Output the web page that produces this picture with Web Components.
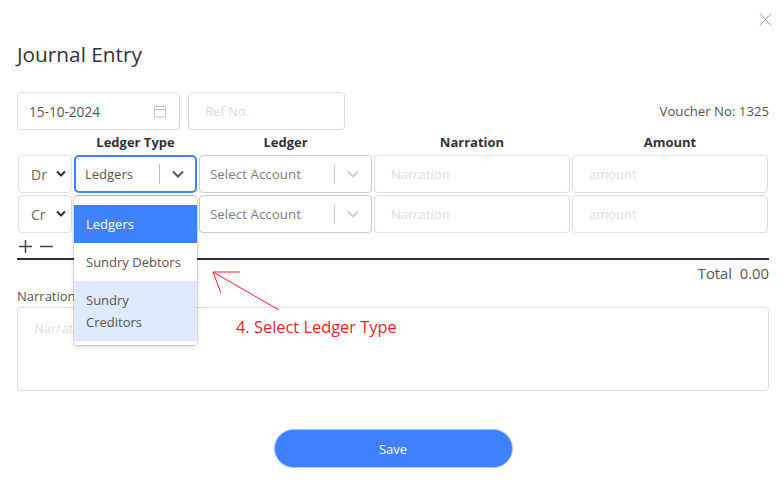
<!DOCTYPE html>
<html>
<head>
<meta charset="utf-8">
<title>Journal Entry</title>
<style>
  html, body { margin: 0; background: #fff; }
  body { font-family: "Open Sans", "Noto Sans", sans-serif; font-size: 13px; color: #444; }
</style>
</head>
<body>
<journal-modal>
  <span slot="title">Journal Entry</span>
  <span slot="voucher">Voucher No: 1325</span>
</journal-modal>

<script>
// ============ SMALL FIELD BOX =================
class FieldBox extends HTMLElement {
  connectedCallback() {
    const shadowRoot = this.attachShadow({ mode: "open" })
    shadowRoot.innerHTML = `
      <style>
        :host {
          display: flex;
          align-items: center;
          box-sizing: border-box;
          height: 38px;
          padding: 0 12px 0 16px;
          border: 1px solid #ddd;
          border-radius: 4px;
          color: #ddd;
          background: #fff;
          overflow: hidden;
          white-space: nowrap;
        }
        :host([value]) { color: #555; padding-left: 11px; justify-content: space-between; font-size: 13.6px; }
      </style>
      <slot></slot>
    `
  }
}

// ============ NATIVE LOOKING SELECT (Dr / Cr) =================
class SignSelect extends HTMLElement {
  connectedCallback() {
    const shadowRoot = this.attachShadow({ mode: "open" })
    shadowRoot.innerHTML = `
      <style>
        :host {
          display: flex;
          align-items: center;
          justify-content: space-between;
          box-sizing: border-box;
          height: 38px;
          padding: 0 4px 0 12px;
          border: 1px solid #e0e0e0;
          border-radius: 4px;
          color: #666;
          font-size: 14px;
        }
        svg { display: block; }
      </style>
      <slot></slot>
      <svg width="12" height="8" viewBox="0 0 12 8"><path d="M2 1.5 6 5.5 10 1.5" fill="none" stroke="#333" stroke-width="2"/></svg>
    `
  }
}

// ============ REACT-SELECT STYLE COMBO =================
class ComboBox extends HTMLElement {
  connectedCallback() {
    const shadowRoot = this.attachShadow({ mode: "open" })
    const active = this.hasAttribute("active")
    shadowRoot.innerHTML = `
      <style>
        :host {
          display: flex;
          align-items: center;
          box-sizing: border-box;
          height: 38px;
          padding-left: 10px;
          border: 1px solid #ccc;
          border-radius: 4px;
          color: #808080;
          background: #fff;
          white-space: nowrap;
          font-size: 13.4px;
        }
        :host([active]) {
          border: 2px solid #3f82fd;
          padding-left: 9px;
          color: #555;
          border-radius: 5px;
          font-size: 13px;
        }
        .text { flex: 1; min-width: 0; }
        .sep { width: 1px; height: 20px; background: ${active ? "#bbb" : "#ccc"}; }
        .arrow { width: ${active ? 35 : 36}px; display: flex; justify-content: center; }
      </style>
      <span class="text"><slot></slot></span>
      <span class="sep"></span>
      <span class="arrow">
        <svg width="14" height="10" viewBox="0 0 14 10"><path d="M2 2.5 7 7.5 12 2.5" fill="none" stroke="${active ? "#555" : "#ccc"}" stroke-width="2"/></svg>
      </span>
    `
  }
}

// ============ OPEN MENU OF LEDGER TYPE =================
class ComboMenu extends HTMLElement {
  connectedCallback() {
    const shadowRoot = this.attachShadow({ mode: "open" })
    shadowRoot.innerHTML = `
      <style>
        :host {
          position: absolute;
          top: 39px;
          left: -2px;
          right: -2px;
          z-index: 10;
          box-sizing: border-box;
          height: 149px;
          padding: 9px 0 4px;
          background: #fff;
          border-radius: 4px;
          box-shadow: 0 0 0 1px rgba(0,0,0,.1), 0 2px 5px rgba(0,0,0,.15);
          color: #555;
          white-space: normal;
        }
        div { padding: 8px 12px; line-height: 22px; }
        .selected { background: #3f82fd; color: #fff; font-weight: 500; }
        .focused { background: #deebff; }
      </style>
      <div class="selected">Ledgers</div>
      <div>Sundry Debtors</div>
      <div class="focused">Sundry Creditors</div>
    `
  }
}

// ============ RED CALLOUT ON TOP OF THE SCREENSHOT =================
class StepNote extends HTMLElement {
  connectedCallback() {
    const shadowRoot = this.attachShadow({ mode: "open" })
    shadowRoot.innerHTML = `
      <style>
        :host { position: absolute; left: 205px; top: 265px; z-index: 20; pointer-events: none; }
        svg { display: block; }
        span {
          position: absolute;
          left: 31px;
          top: 50px;
          font-size: 16.4px;
          line-height: 24px;
          color: #f01c2c;
          white-space: nowrap;
        }
      </style>
      <svg width="90" height="50" viewBox="0 0 90 50">
        <path d="M74 45 8 7H35M8 7 16 28" fill="none" stroke="#f01c2c" stroke-width="1"/>
      </svg>
      <span>4. Select Ledger Type</span>
    `
  }
}

// ============ THE ENTRY GRID =================
class EntryRows extends HTMLElement {
  connectedCallback() {
    const shadowRoot = this.attachShadow({ mode: "open" })
    const row = (sign, active) => `
      <sign-select>${sign}</sign-select>
      <combo-box ${active ? "active" : ""} class="type">${active ? "Ledgers<combo-menu></combo-menu>" : ""}</combo-box>
      <combo-box>Select Account</combo-box>
      <field-box>Narration</field-box>
      <field-box>amount</field-box>
    `
    shadowRoot.innerHTML = `
      <style>
        :host { display: block; margin-left: 1px; width: 750px; }
        .grid {
          display: grid;
          grid-template-columns: 54px 123px 173px 196px 196px;
          column-gap: 2px;
          row-gap: 2px;
        }
        .head {
          font-weight: 700;
          color: #333;
          text-align: center;
          line-height: 18px;
          height: 20px;
        }
        .type { position: relative; }
      </style>
      <div class="grid">
        <div></div>
        <div class="head">Ledger Type</div>
        <div class="head">Ledger</div>
        <div class="head">Narration</div>
        <div class="head">Amount</div>
        ${row("Dr", true)}
        ${row("Cr", false)}
      </div>
    `
  }
}

// ============ THE DIALOG =================
class JournalModal extends HTMLElement {
  connectedCallback() {
    const shadowRoot = this.attachShadow({ mode: "open" })
    shadowRoot.innerHTML = `
      <style>
        :host {
          display: block;
          position: relative;
          box-sizing: border-box;
          width: 784px;
          height: 501px;
          padding: 0 15px 0 17px;
          overflow: hidden;
        }
        .close { display: flex; justify-content: flex-end; height: 39px; padding-top: 13px; box-sizing: border-box; margin-right: -3px; }
        .title { font-size: 20.8px; line-height: 30px; color: #333; height: 53px; }
        .tools { display: flex; align-items: center; gap: 8px; height: 38px; }
        .date { width: 163px; }
        .ref { width: 157px; }
        .voucher { margin-left: auto; color: #555; font-size: 13.2px; }
        .rows { margin-top: 3px; }
        .ctrl { display: flex; align-items: center; gap: 8px; height: 25px; padding: 1px 0 0 2px; box-sizing: border-box; }
        hr { border: 0; height: 2px; margin: 0; background: #2f3042; }
        .total { text-align: right; line-height: 26px; height: 26px; font-size: 14.8px; color: #555; white-space: pre; }
        .label { line-height: 20px; height: 21px; color: #555; }
        .area { height: 84px; box-sizing: border-box; border: 1px solid #ddd; border-radius: 4px; padding: 11px 16px; color: #ddd; }
        .actions { display: flex; justify-content: center; margin-top: 38px; }
        button {
          width: 239px;
          height: 39px;
          border: 1px solid #a9c8fb;
          border-radius: 20px;
          background: #3f80ff;
          color: #fff;
          font: inherit;
          padding: 0;
        }
      </style>
      <div class="close">
        <svg width="13" height="13" viewBox="0 0 13 13"><path d="M1 .5 12 12.5M12 .5 1 12.5" fill="none" stroke="#999" stroke-width="1"/></svg>
      </div>
      <div class="title"><slot name="title"></slot></div>
      <div class="tools">
        <field-box class="date" value>
          <span>15-10-2024</span>
          <svg width="14" height="14" viewBox="0 0 14 14"><path d="M1.5 2.5H12.5V13H1.5ZM1.5 5.5H12.5M4 1V3M10 1V3" fill="none" stroke="#c4c4c4"/></svg>
        </field-box>
        <field-box class="ref">Ref No.</field-box>
        <span class="voucher"><slot name="voucher"></slot></span>
      </div>
      <entry-rows class="rows"></entry-rows>
      <div class="ctrl">
        <svg width="13" height="13" viewBox="0 0 13 13"><path d="M0 6.5H13M6.5 0V13" stroke="#444" stroke-width="1.5"/></svg>
        <svg width="13" height="13" viewBox="0 0 13 13"><path d="M0 6.5H13" stroke="#444" stroke-width="1.5"/></svg>
      </div>
      <hr>
      <div class="total">Total  0.00</div>
      <div class="label">Narration</div>
      <div class="area">Narration</div>
      <div class="actions"><button>Save</button></div>
      <step-note></step-note>
    `
  }
}

customElements.define("field-box", FieldBox)
customElements.define("sign-select", SignSelect)
customElements.define("combo-box", ComboBox)
customElements.define("combo-menu", ComboMenu)
customElements.define("step-note", StepNote)
customElements.define("entry-rows", EntryRows)
customElements.define("journal-modal", JournalModal)
</script>
</body>
</html>
